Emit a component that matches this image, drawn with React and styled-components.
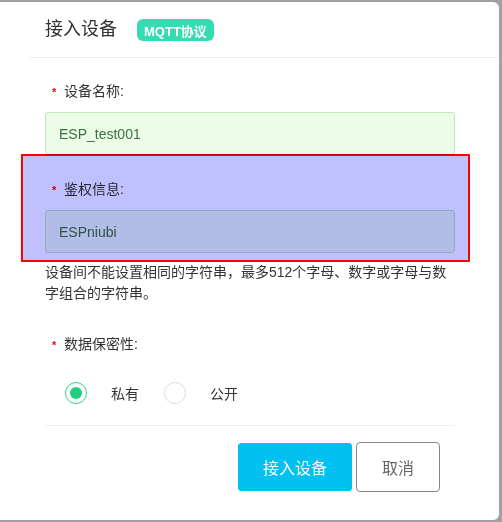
import React from 'react'
import styled, { createGlobalStyle } from 'styled-components'

const Global = createGlobalStyle`
  html, body { margin: 0; padding: 0; }
  body {
    background: #a0a2a6;
    font-family: "Liberation Sans", "Noto Sans CJK SC", sans-serif;
    overflow: hidden;
  }
`

const Dialog = styled.div`
  width: 499px;
  height: 518px;
  margin-top: 2px;
  background: #fff;
  border-radius: 0 6px 6px 0;
  box-sizing: border-box;
`

const Header = styled.div`
  display: flex;
  align-items: center;
  margin-left: 30px;
  padding: 15px 0 16px 15px;
  border-bottom: 1px solid #eeeeee;
`

const Title = styled.h2`
  margin: 0;
  font-size: 18px;
  line-height: 24px;
  font-weight: normal;
  color: #333;
`

const Badge = styled.span`
  margin-left: 20px;
  margin-top: 2px;
  height: 22px;
  padding: 0 7px;
  display: inline-flex;
  align-items: center;
  border-radius: 6px;
  background: #35dbb1;
  color: #fff;
  font-size: 13px;
  font-weight: bold;
`

const Body = styled.div`
  padding: 22px 44px 0 45px;
`

const Field = styled.div`
  position: relative;
  margin-top: ${p => p.$top ?? 0}px;
  margin-bottom: ${p => p.$gap ?? 23}px;
`

const Label = styled.div`
  display: flex;
  align-items: center;
  height: 20px;
  font-size: 14px;
  color: #333;
  margin-bottom: 12px;
`

const Star = styled.span`
  width: 12px;
  margin-left: 7px;
  margin-top: 3px;
  color: #f00;
  font-size: 11px;
  font-weight: bold;
`

const Input = styled.input`
  display: block;
  width: 100%;
  height: 43px;
  box-sizing: border-box;
  padding: 0 13px;
  border: 1px solid #c3e6b8;
  border-radius: 3px;
  background: #ecfce6;
  color: #3c6e47;
  font-family: inherit;
  font-size: 14px;
  outline: none;
`

const Highlight = styled.span`
  position: absolute;
  left: -24px;
  right: -15px;
  top: -24px;
  bottom: -9px;
  border: 2px solid #ff0000;
  background: #c0c0ff;
  mix-blend-mode: multiply;
  pointer-events: none;
`

const Hint = styled.p`
  margin: 9px 0 0;
  font-size: 14px;
  line-height: 21px;
  color: #333;
`

const Radios = styled.div`
  display: flex;
  align-items: center;
  padding: 17px 0 21px 20px;
  border-bottom: 1px solid #eeeeee;
`

const Radio = styled.label`
  display: flex;
  align-items: center;
  font-size: 14px;
  color: #333;
  margin-right: 25px;
`

const Circle = styled.span`
  width: 22px;
  height: 22px;
  box-sizing: border-box;
  border-radius: 50%;
  border: 1px solid ${p => (p.$on ? '#2ed88a' : '#dddddd')};
  display: flex;
  align-items: center;
  justify-content: center;
  margin-right: 24px;
  &::after {
    content: '';
    width: 12px;
    height: 12px;
    border-radius: 50%;
    background: ${p => (p.$on ? '#22cc80' : 'transparent')};
  }
`

const Footer = styled.div`
  display: flex;
  justify-content: flex-end;
  gap: 4px;
  padding: 16px 15px 0 0;
`

const Button = styled.button`
  height: ${p => (p.$primary ? 48 : 50)}px;
  margin-top: ${p => (p.$primary ? 1 : 0)}px;
  width: ${p => (p.$primary ? 114 : 84)}px;
  border: 1px solid ${p => (p.$primary ? '#00c1f0' : '#85858f')};
  border-radius: ${p => (p.$primary ? 3 : 4)}px;
  background: ${p => (p.$primary ? '#00c1f0' : '#fff')};
  color: ${p => (p.$primary ? '#fff' : '#666')};
  font-family: inherit;
  font-size: 16px;
  cursor: pointer;
`

export default function App() {
  return (
    <>
      <Global />
      <Dialog>
        <Header>
          <Title>接入设备</Title>
          <Badge>MQTT协议</Badge>
        </Header>
        <Body>
          <Field>
            <Label><Star>*</Star>设备名称:</Label>
            <Input defaultValue="ESP_test001" />
          </Field>
          <Field $gap={0}>
            <Label><Star>*</Star>鉴权信息:</Label>
            <Input defaultValue="ESPniubi" />
            <Highlight />
          </Field>
          <Hint>设备间不能设置相同的字符串，最多512个字母、数字或字母与数字组合的字符串。</Hint>
          <Field $top={29} $gap={0}>
            <Label><Star>*</Star>数据保密性:</Label>
          </Field>
          <Radios>
            <Radio><Circle $on />私有</Radio>
            <Radio><Circle />公开</Radio>
          </Radios>
          <Footer>
            <Button $primary>接入设备</Button>
            <Button>取消</Button>
          </Footer>
        </Body>
      </Dialog>
    </>
  )
}
